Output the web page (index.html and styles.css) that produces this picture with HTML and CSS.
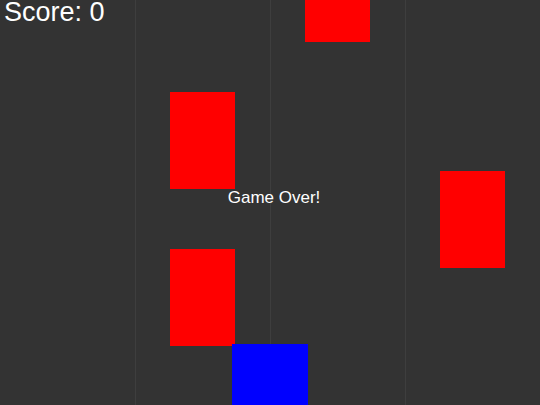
FILE: index.html
```html
<!DOCTYPE html>
<html lang="en">
<head>
  <meta charset="UTF-8">
  <title>Lane Dodge</title>
  <link rel="stylesheet" href="styles.css">
</head>
<body>
  <div class="game">
    <!-- lanes -->
    <div class="lanes">
      <div class="lane"></div>
      <div class="lane"></div>
      <div class="lane"></div>
      <div class="lane"></div>
    </div>

    <!-- obstacles -->
    <div class="block enemy e1"></div>
    <div class="block enemy e2"></div>
    <div class="block enemy e3"></div>
    <div class="block enemy e4"></div>

    <!-- player -->
    <div class="block player"></div>

    <div class="score">Score: 0</div>
    <div class="message">Game Over!</div>
  </div>
</body>
</html>
```

FILE: styles.css
```css
body {
  margin: 0;
  padding: 0;
  background-color: #333333;
  font-family: "Liberation Sans", Arial, sans-serif;
  overflow: hidden;
}

.game {
  position: relative;
  width: 540px;
  height: 405px;
  overflow: hidden;
  background-color: #333333;
}

.lanes {
  display: grid;
  grid-template-columns: repeat(4, 1fr);
  height: 100%;
}

.lane {
  border-left: 1px solid #3e3e3e;
}

.lane:first-child {
  border-left: none;
}

.block {
  position: absolute;
}

.enemy {
  width: 65px;
  height: 97px;
  background-color: #ff0000;
}

.e1 { left: 170px; top: 92px; }
.e2 { left: 170px; top: 249px; }
.e3 { left: 305px; top: -55px; }
.e4 { left: 440px; top: 171px; }

.player {
  left: 232px;
  top: 344px;
  width: 76px;
  height: 76px;
  background-color: #0000ff;
}

.score {
  position: absolute;
  left: 4px;
  top: 0;
  font-size: 27px;
  line-height: 24px;
  color: white;
}

.message {
  position: absolute;
  left: 0;
  right: 0;
  top: 189px;
  padding-left: 8px;
  text-align: center;
  font-size: 17px;
  line-height: 1;
  color: white;
}
```
